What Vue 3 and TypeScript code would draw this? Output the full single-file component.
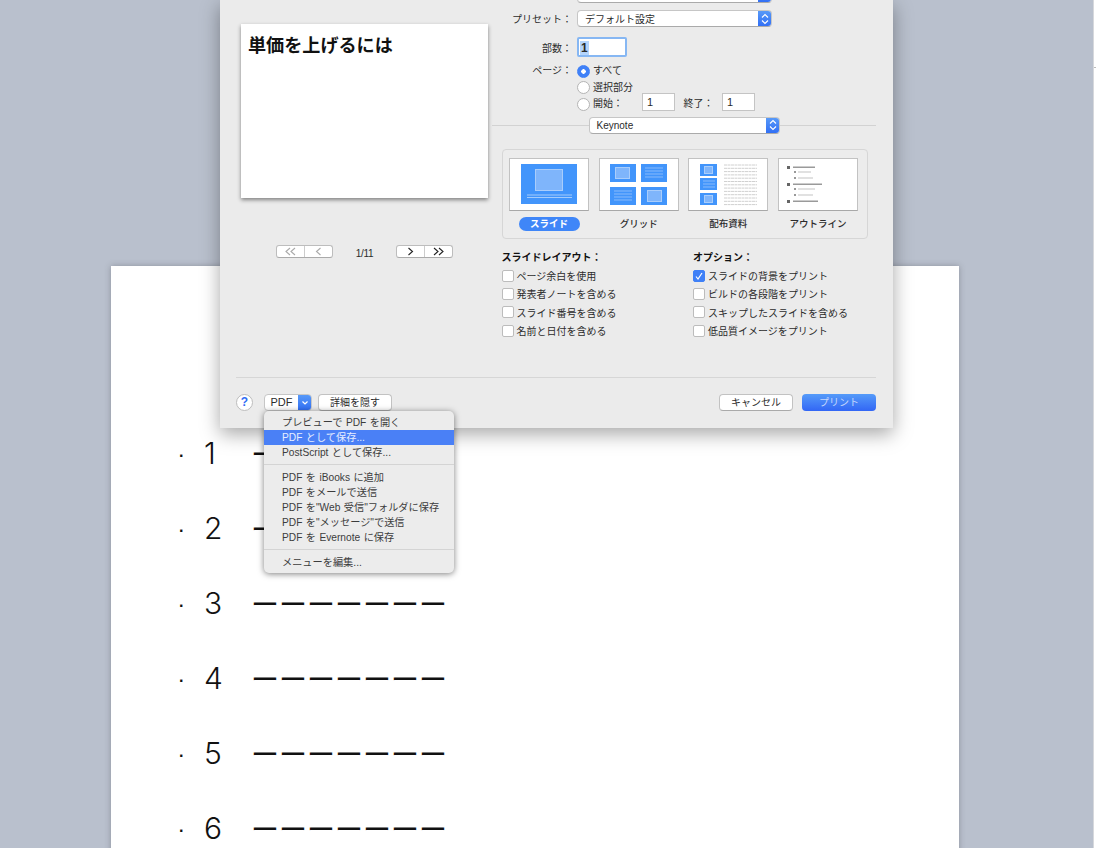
<template>
  <div class="screen">
    <div class="sheet">
      <div v-for="n in docRows" :key="n" class="doc-row">
        <span class="doc-dot">·</span>
        <span class="doc-num">{{ n }}</span>
        <span class="doc-dash">ーーーーーーー</span>
      </div>
    </div>

    <div class="edge"><i></i></div>

    <div class="dialog">
      <div class="main">
        <div class="left">
          <div class="preview">単価を上げるには</div>
          <div class="pager">
            <div class="seg">
              <span class="off">
                <svg width="13" height="9" viewBox="0 0 13 9"><path d="M6 1 2 4.5 6 8M11 1 7 4.5 11 8" /></svg>
              </span>
              <span class="off">
                <svg width="7" height="9" viewBox="0 0 7 9"><path d="M5.5 1 1.5 4.5 5.5 8" /></svg>
              </span>
            </div>
            <span class="count">1/11</span>
            <div class="seg">
              <span>
                <svg width="7" height="9" viewBox="0 0 7 9"><path d="M1.5 1 5.5 4.5 1.5 8" /></svg>
              </span>
              <span>
                <svg width="13" height="9" viewBox="0 0 13 9"><path d="M2 1 6 4.5 2 8M7 1 11 4.5 7 8" /></svg>
              </span>
            </div>
          </div>
        </div>

        <div class="right">
          <div class="form-row clipped">
            <span class="label"></span>
            <div class="select wide"><b class="arrows"></b></div>
          </div>
          <div class="form-row preset">
            <span class="label">プリセット：</span>
            <div class="select wide">
              <span>デフォルト設定</span>
              <b class="arrows">
                <svg width="8" height="12" viewBox="0 0 8 12"><path d="M1 4.5 4 1.5 7 4.5M1 7.5 4 10.5 7 7.5" /></svg>
              </b>
            </div>
          </div>
          <div class="form-row copies">
            <span class="label">部数：</span>
            <div class="copies-input"><span>1</span></div>
          </div>
          <div class="form-row pages">
            <span class="label">ページ：</span>
            <div class="radios">
              <div class="radio-row">
                <i class="radio on"></i><span>すべて</span>
              </div>
              <div class="radio-row">
                <i class="radio"></i><span>選択部分</span>
              </div>
              <div class="radio-row range">
                <i class="radio"></i><span class="from">開始：</span>
                <div class="num">1</div>
                <span class="to">終了：</span>
                <div class="num">1</div>
              </div>
            </div>
          </div>

          <div class="sep-row">
            <div class="select keynote">
              <span>Keynote</span>
              <b class="arrows">
                <svg width="8" height="12" viewBox="0 0 8 12"><path d="M1 4.5 4 1.5 7 4.5M1 7.5 4 10.5 7 7.5" /></svg>
              </b>
            </div>
          </div>

          <div class="panel">
            <div class="thumb-col">
              <div class="thumb">
                <svg width="78" height="51" viewBox="1 1 78 51">
                  <rect x="12" y="6" width="56" height="40" fill="#4295fb" />
                  <rect x="26.5" y="11.5" width="27" height="21" fill="#7fb5fb" stroke="#a9cdfb" />
                  <path d="M18 37H63M18 39.5H63" stroke="#a3cbfb" fill="none" />
                </svg>
              </div>
              <span class="pill">スライド</span>
            </div>
            <div class="thumb-col">
              <div class="thumb">
                <svg width="78" height="51" viewBox="1 1 78 51">
                  <rect x="11" y="6" width="26" height="18" fill="#4295fb" />
                  <rect x="42" y="6" width="26" height="18" fill="#4295fb" />
                  <rect x="11" y="29" width="26" height="18" fill="#4295fb" />
                  <rect x="42" y="29" width="26" height="18" fill="#4295fb" />
                  <rect x="16.5" y="9.5" width="14" height="11" fill="#7fb5fb" stroke="#a9cdfb" />
                  <rect x="48.5" y="32.5" width="14" height="11" fill="#7fb5fb" stroke="#a9cdfb" />
                  <path d="M46 10H64M46 13H64M46 16H64M46 19H64M15 33H33M15 36H33M15 39H33M15 42H33" stroke="#88bafb" fill="none" />
                </svg>
              </div>
              <span class="thumb-label">グリッド</span>
            </div>
            <div class="thumb-col">
              <div class="thumb">
                <svg width="78" height="51" viewBox="1 1 78 51">
                  <rect x="12" y="6" width="17" height="12" fill="#4295fb" />
                  <rect x="12" y="20" width="17" height="12" fill="#4295fb" />
                  <rect x="12" y="35" width="17" height="12" fill="#4295fb" />
                  <rect x="16.5" y="8.5" width="8" height="7" fill="#7fb5fb" stroke="#a9cdfb" />
                  <rect x="16.5" y="37.5" width="8" height="7" fill="#7fb5fb" stroke="#a9cdfb" />
                  <path d="M15 23H27M15 26H27M15 29H27" stroke="#88bafb" fill="none" />
                  <path
                    d="M36 7H69M36 10.3H69M36 13.6H69M36 16.9H69M36 20.2H69M36 23.5H69M36 26.8H69M36 30.1H69M36 33.4H69M36 36.7H69M36 40H69M36 43.3H69M36 46.6H69"
                    stroke="#d0d0d0"
                    stroke-dasharray="3 0.5"
                    fill="none"
                  />
                </svg>
              </div>
              <span class="thumb-label">配布資料</span>
            </div>
            <div class="thumb-col">
              <div class="thumb">
                <svg width="78" height="51" viewBox="1 1 78 51">
                  <g v-for="b in outline" :key="b.y">
                    <rect :x="b.sub ? 16 : 9" :y="b.y - 1" :width="b.sub ? 2 : 3" :height="b.sub ? 2 : 3" :fill="b.sub ? '#999' : '#666'" />
                    <rect :x="b.sub ? 20 : 15" :y="b.y - 0.5" :width="b.w" :height="b.sub ? 1 : 1.5" :fill="b.sub ? '#c4c4c4' : '#9a9a9a'" />
                  </g>
                </svg>
              </div>
              <span class="thumb-label">アウトライン</span>
            </div>
          </div>

          <div class="options">
            <div v-for="col in optionCols" :key="col.title" class="opt-col">
              <div class="opt-title">{{ col.title }}</div>
              <div v-for="item in col.items" :key="item.text" class="opt-row">
                <i class="check" :class="{ on: item.on }">
                  <svg v-if="item.on" width="10" height="10" viewBox="0 0 10 10"><path d="M2 5.5 4 8 8 2" /></svg>
                </i>
                <span>{{ item.text }}</span>
              </div>
            </div>
          </div>
        </div>
      </div>

      <div class="footer">
        <span class="help">?</span>
        <div class="pdf">
          <span class="pdf-text">PDF</span>
          <b class="pdf-arrow">
            <svg width="8" height="6" viewBox="0 0 8 6"><path d="M1.5 1.5 4 4 6.5 1.5" /></svg>
          </b>
        </div>
        <button class="btn detail">詳細を隠す</button>
        <span class="spacer"></span>
        <button class="btn cancel">キャンセル</button>
        <button class="btn print">プリント</button>
      </div>
    </div>

    <div class="menu">
      <template v-for="(group, i) in menuGroups" :key="i">
        <div v-if="i > 0" class="menu-sep"></div>
        <div
          v-for="item in group"
          :key="item"
          class="menu-item"
          :class="{ active: item === activeItem }"
        >
          {{ item }}
        </div>
      </template>
    </div>
  </div>
</template>

<script setup lang="ts">
const docRows = [1, 2, 3, 4, 5, 6];

const activeItem = "PDF として保存...";

const menuGroups: string[][] = [
  ["プレビューで PDF を開く", "PDF として保存...", "PostScript として保存..."],
  [
    "PDF を iBooks に追加",
    "PDF をメールで送信",
    'PDF を"Web 受信"フォルダに保存',
    'PDF を"メッセージ"で送信',
    "PDF を Evernote に保存",
  ],
  ["メニューを編集..."],
];

const optionCols = [
  {
    title: "スライドレイアウト：",
    items: [
      { text: "ページ余白を使用", on: false },
      { text: "発表者ノートを含める", on: false },
      { text: "スライド番号を含める", on: false },
      { text: "名前と日付を含める", on: false },
    ],
  },
  {
    title: "オプション：",
    items: [
      { text: "スライドの背景をプリント", on: true },
      { text: "ビルドの各段階をプリント", on: false },
      { text: "スキップしたスライドを含める", on: false },
      { text: "低品質イメージをプリント", on: false },
    ],
  },
];

const outline = [
  { y: 9, w: 22, sub: false },
  { y: 14, w: 13, sub: true },
  { y: 20, w: 15, sub: true },
  { y: 26, w: 29, sub: false },
  { y: 31, w: 17, sub: true },
  { y: 37, w: 15, sub: true },
  { y: 43, w: 25, sub: false },
];
</script>

<style>
html,
body {
  margin: 0;
  background: #b9c0cd;
}
</style>

<style scoped>
.screen {
  position: relative;
  width: 1096px;
  height: 848px;
  overflow: hidden;
  background: #b9c0cd;
  font-family: "Liberation Sans", "Noto Sans CJK JP", sans-serif;
  color: #2b2b2b;
}

.sheet {
  box-sizing: border-box;
  width: 848px;
  height: 600px;
  margin: 266px 0 0 111px;
  padding-top: 150px;
  background: #fff;
  box-shadow: 0 0 6px rgba(60, 60, 70, 0.35);
}
.doc-row {
  display: flex;
  align-items: center;
  height: 75px;
  color: #111;
}
.doc-dot {
  width: 25px;
  margin-left: 68px;
  font-size: 16px;
  font-weight: 700;
  line-height: 20px;
  margin-top: 5px;
}
.doc-num {
  width: 47px;
  margin-bottom: 2px;
  font-family: Inter, "Liberation Sans", sans-serif;
  font-size: 30px;
  font-weight: 300;
  line-height: 40px;
}
.doc-dash {
  font-family: "Noto Sans CJK JP", sans-serif;
  font-size: 28px;
  line-height: 40px;
  margin-bottom: 2px;
  white-space: nowrap;
}

.edge {
  position: absolute;
  top: 0;
  right: 0;
  width: 3px;
  height: 848px;
  background: #fff;
  border-left: 1px solid #d6d8dc;
  box-sizing: border-box;
}
.edge i {
  display: block;
  height: 1px;
  margin-top: 67px;
  background: #bbb;
}

.dialog {
  position: absolute;
  top: 0;
  left: 220px;
  width: 673px;
  height: 428px;
  display: flex;
  flex-direction: column;
  background: #ebebeb;
  box-shadow: 0 6px 18px rgba(0, 0, 0, 0.35);
  font-size: 10px;
  overflow: hidden;
}
.main {
  flex: 1;
  display: flex;
}

.left {
  width: 272px;
  padding-top: 24px;
}
.preview {
  box-sizing: border-box;
  width: 247px;
  height: 174px;
  margin-left: 21px;
  padding: 10px 7px;
  background: #fff;
  box-shadow: 0 2px 4px rgba(0, 0, 0, 0.45);
  font-size: 18.1px;
  line-height: 24px;
  font-weight: 700;
  color: #111;
}
.pager {
  display: flex;
  align-items: center;
  margin: 46px 0 0 56px;
}
.seg {
  display: flex;
  width: 57px;
  height: 13px;
  box-sizing: border-box;
  background: #fff;
  border: 1px solid #bdbdbd;
  border-bottom-color: #aaa;
  border-radius: 3px;
}
.seg span {
  flex: 1;
  display: flex;
  align-items: center;
  justify-content: center;
}
.seg span + span {
  border-left: 1px solid #ccc;
}
.seg svg {
  fill: none;
  stroke: #222;
  stroke-width: 1.1;
}
.seg .off svg {
  stroke: #aaa;
}
.count {
  width: 63px;
  margin-top: 4px;
  text-align: center;
  font-size: 10px;
  letter-spacing: -0.3px;
}

.right {
  width: 384px;
}
.form-row {
  display: flex;
}
.label {
  width: 80px;
  flex: none;
  text-align: right;
  white-space: nowrap;
  margin-right: 5px;
}
.clipped {
  margin-top: -14px;
}
.preset {
  margin-top: 7px;
  align-items: center;
}
.copies {
  margin-top: 10px;
  align-items: center;
}
.pages {
  margin-top: 6px;
  line-height: 16px;
}

.select {
  position: relative;
  box-sizing: border-box;
  height: 17px;
  display: flex;
  align-items: center;
  padding-left: 7px;
  background: #fff;
  border: 1px solid #c6c6c6;
  border-bottom-color: #aaa;
  border-radius: 4px;
  overflow: hidden;
  font-size: 10px;
}
.wide {
  width: 195px;
}
.arrows {
  position: absolute;
  top: -1px;
  right: -1px;
  bottom: -1px;
  width: 14px;
  display: flex;
  align-items: center;
  justify-content: center;
  background: linear-gradient(#5a9cf8, #2f6df5);
}
.arrows svg {
  fill: none;
  stroke: #fff;
  stroke-width: 1.1;
}

.copies-input {
  box-sizing: border-box;
  width: 50px;
  height: 20px;
  padding: 2px 0 0 1px;
  background: #fff;
  border: 2px solid #86b7f3;
  border-radius: 2px;
  font-size: 12px;
  font-weight: 700;
  line-height: 14px;
}
.copies-input span {
  display: inline-block;
  padding: 0 1px;
  background: #b3d4fc;
}

.radio-row {
  display: flex;
  align-items: center;
  height: 16px;
  margin-bottom: 0.5px;
}
.radio {
  box-sizing: border-box;
  width: 13px;
  height: 13px;
  margin-right: 3px;
  background: #fff;
  border: 1px solid #b4b4b4;
  border-radius: 50%;
}
.radio.on {
  background: radial-gradient(circle, #fff 0 2px, #3f80f7 2.5px);
  border-color: #3f80f7;
}
.range .from {
  width: 49px;
}
.num {
  box-sizing: border-box;
  width: 33px;
  height: 18px;
  margin-top: -4px;
  padding-left: 4px;
  background: #fff;
  border: 1px solid #c4c4c4;
  font-size: 11px;
  line-height: 17px;
}
.range .to {
  width: 47px;
  text-align: center;
}

.sep-row {
  display: flex;
  justify-content: center;
  margin: 4px 0 0;
  height: 17px;
  background: linear-gradient(#d2d2d2, #d2d2d2) no-repeat 0 8px / 100% 1px;
}
.keynote {
  width: 191px;
  margin-right: 0;
}

.panel {
  box-sizing: border-box;
  display: flex;
  gap: 9.7px;
  width: 366px;
  height: 90px;
  margin: 15px 0 0 10px;
  padding: 8px 0 0 6px;
  border: 1px solid #d6d6d6;
  border-radius: 4px;
  background: #ececec;
}
.thumb-col {
  display: flex;
  flex-direction: column;
  align-items: center;
  width: 80px;
}
.thumb {
  box-sizing: border-box;
  width: 80px;
  height: 53px;
  background: #fff;
  border: 1px solid #c2c2c2;
  border-bottom-color: #a8a8a8;
}
.thumb svg {
  display: block;
}
.thumb-label,
.pill {
  margin-top: 6px;
  height: 14px;
  font-size: 9.5px;
  line-height: 14px;
  font-weight: 500;
}
.pill {
  width: 61px;
  text-align: center;
  color: #fff;
  font-weight: 700;
  background: #3f86f8;
  border-radius: 7px;
}

.options {
  display: grid;
  grid-template-columns: 191.5px 1fr;
  margin: 12px 0 0 9.5px;
}
.opt-title {
  height: 14px;
  margin-bottom: 2px;
  font-weight: 700;
  line-height: 14px;
  color: #111;
}
.opt-row {
  display: flex;
  align-items: center;
  height: 18.3px;
  white-space: nowrap;
}
.check {
  box-sizing: border-box;
  display: flex;
  align-items: center;
  justify-content: center;
  width: 12px;
  height: 12px;
  margin-right: 3px;
  background: #fff;
  border: 1px solid #bcbcbc;
  border-radius: 2px;
}
.check.on {
  background: #3f80f7;
  border-color: #3f80f7;
}
.check svg {
  fill: none;
  stroke: #fff;
  stroke-width: 1.2;
}

.footer {
  display: flex;
  align-items: flex-start;
  box-sizing: border-box;
  height: 51px;
  margin: 0 17px 0 16px;
  padding-top: 16px;
  border-top: 1px solid #d6d6d6;
}
.help {
  box-sizing: border-box;
  width: 17px;
  height: 17px;
  margin-right: 11px;
  text-align: center;
  background: #fff;
  border: 1px solid #bdbdbd;
  border-radius: 50%;
  color: #2f6df5;
  font-size: 12px;
  font-weight: 700;
  line-height: 15px;
}
.pdf {
  display: flex;
  width: 48px;
  height: 17px;
  box-sizing: border-box;
  border: 1px solid #c6c6c6;
  border-radius: 4px;
  background: #fff;
  overflow: hidden;
  margin-right: 6px;
}
.pdf-text {
  flex: 1;
  text-align: center;
  font-size: 11px;
  line-height: 15px;
}
.pdf-arrow {
  width: 14px;
  display: flex;
  align-items: center;
  justify-content: center;
  margin: -1px -1px -1px 0;
  background: linear-gradient(#5a9cf8, #2f6df5);
}
.pdf-arrow svg {
  fill: none;
  stroke: #fff;
  stroke-width: 1.2;
}
.spacer {
  flex: 1;
}
.btn {
  box-sizing: border-box;
  width: 74px;
  height: 17px;
  padding: 0;
  background: #fff;
  border: 1px solid #c2c2c2;
  border-bottom-color: #aaa;
  border-radius: 4px;
  font-family: inherit;
  font-size: 10px;
  line-height: 15px;
  color: #2b2b2b;
}
.print {
  margin-left: 9px;
  border: none;
  color: #c6d7fc;
  background: linear-gradient(#559bf9, #3266f5);
}

.menu {
  position: absolute;
  top: 411px;
  left: 264px;
  box-sizing: border-box;
  width: 190px;
  height: 162px;
  padding-top: 4px;
  background: #ececec;
  border-radius: 5px;
  box-shadow: 0 1px 6px rgba(0, 0, 0, 0.5);
  font-size: 10.2px;
  word-spacing: 0.6px;
  color: #3c3c3c;
}
.menu-item {
  height: 15px;
  padding-left: 18px;
  line-height: 15px;
  white-space: nowrap;
}
.menu-item.active {
  color: #e6eeff;
  background: #4a80f6;
}
.menu-sep {
  height: 1px;
  margin: 4px 0 5px;
  background: #d4d4d4;
}
</style>
